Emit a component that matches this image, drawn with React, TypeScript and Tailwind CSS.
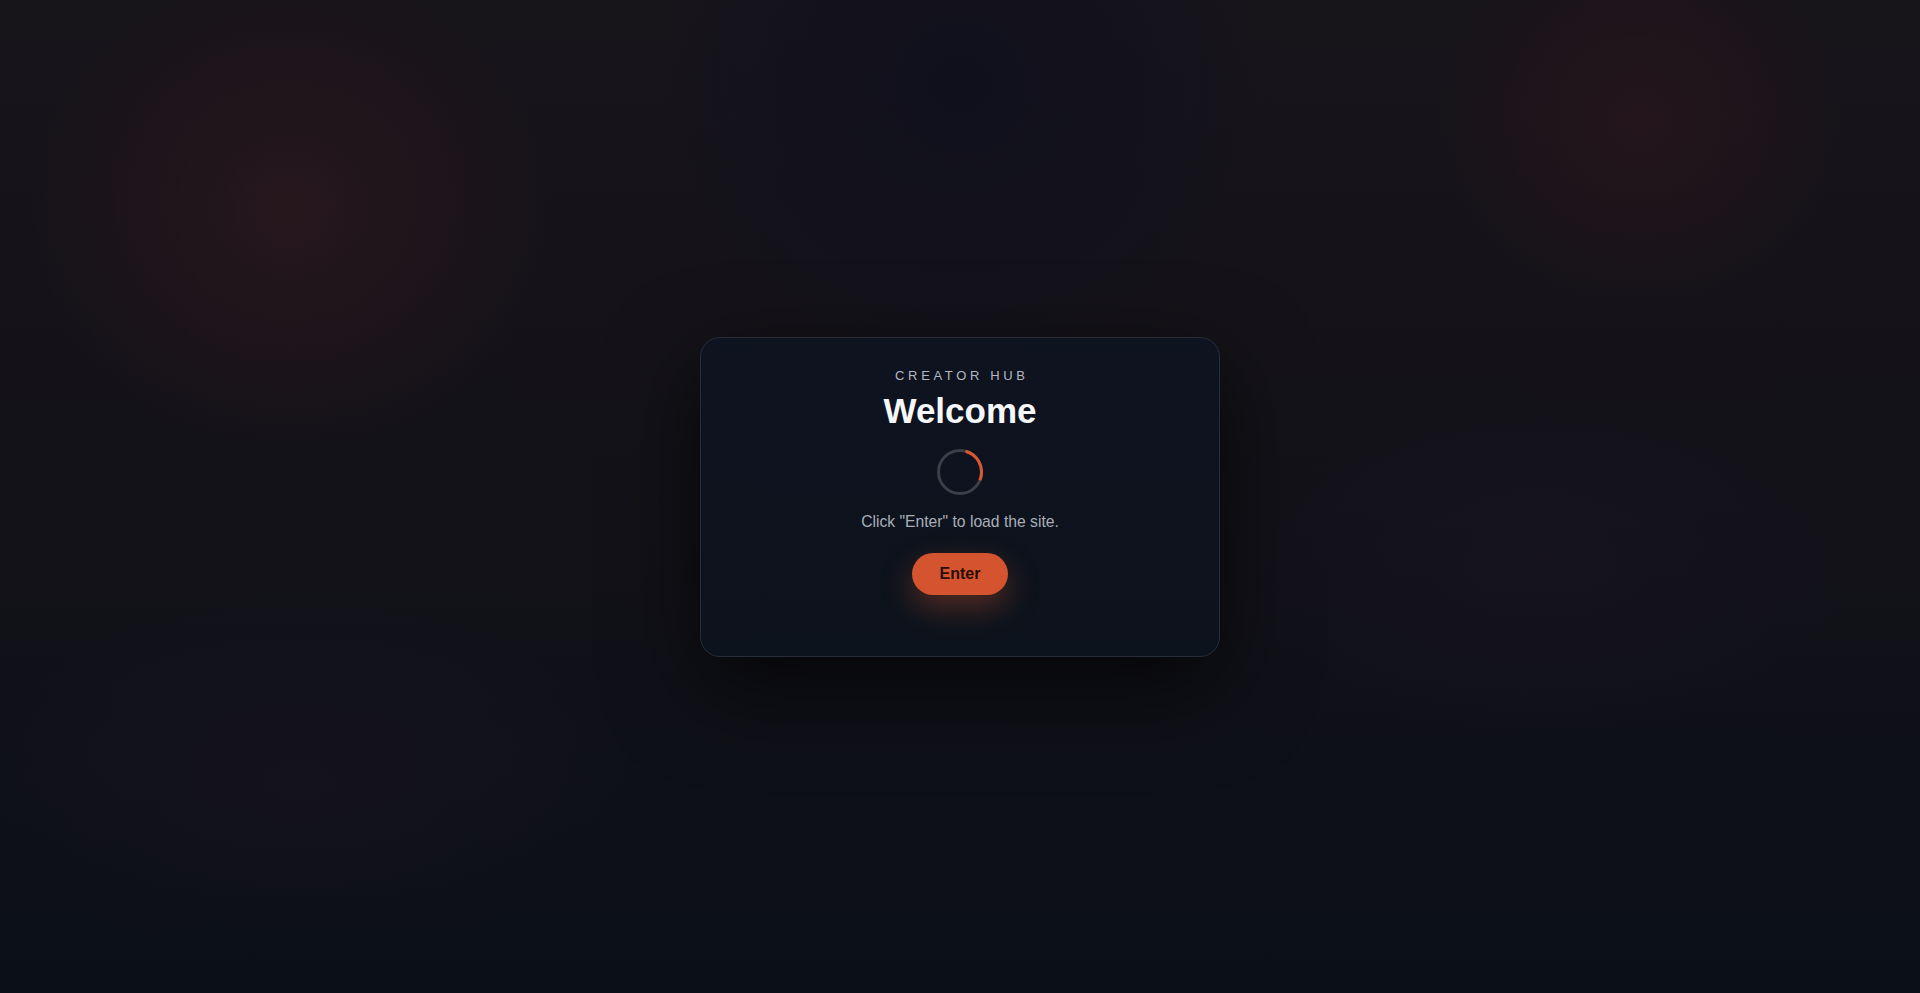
import { useState } from "react";

function Spinner() {
  // static frame of the loading ring: faint track + orange arc
  const r = 21.5;
  const c = 2 * Math.PI * r;
  return (
    <svg width="46" height="46" viewBox="0 0 46 46" className="mt-[17px]">
      <circle cx="23" cy="23" r={r} fill="none" stroke="#3b3f47" strokeWidth="3" />
      <circle
        cx="23"
        cy="23"
        r={r}
        fill="none"
        stroke="#d9572f"
        strokeWidth="3"
        strokeDasharray={`${c * 0.27} ${c}`}
        transform="rotate(-75 23 23)"
      />
    </svg>
  );
}

export default function App() {
  const [entered, setEntered] = useState(false);

  return (
    <div className="flex h-[993px] w-full items-center justify-center overflow-hidden bg-[#121217] bg-[radial-gradient(ellipse_260px_240px_at_290px_210px,rgba(44,24,30,0.75),transparent),radial-gradient(ellipse_200px_190px_at_1640px_120px,rgba(42,22,28,0.7),transparent),radial-gradient(ellipse_300px_280px_at_960px_80px,rgba(14,15,30,0.8),transparent),radial-gradient(ellipse_320px_170px_at_1540px_560px,rgba(22,19,32,0.8),transparent),radial-gradient(ellipse_340px_180px_at_300px_780px,rgba(22,19,32,0.7),transparent),linear-gradient(to_bottom,#17141a,#131218_50%,#0b0f17)] font-['Liberation_Sans',Arial,sans-serif]">
      <section className="flex h-[320px] w-[520px] flex-col items-center rounded-[20px] border border-[#262c3a] bg-gradient-to-b from-[#0e1320] to-[#0d131c] px-8 pt-[28px] shadow-[0_30px_90px_rgba(0,0,0,0.65)]">
        <p className="pl-[0.28em] text-[13px] leading-5 tracking-[0.28em] text-[#b4b8c2]">CREATOR HUB</p>
        <h1 className="mt-1 text-[35px] font-bold leading-[42px] text-[#f5f7fb]">Welcome</h1>
        <Spinner />
        <p className="mt-[15px] text-[15.7px] leading-6 text-[#a9aeb9]">
          {entered ? "Loading…" : 'Click "Enter" to load the site.'}
        </p>
        <button
          onClick={() => setEntered(true)}
          className="mt-[19px] h-[42px] rounded-full bg-[#d4542f] px-7 text-base font-bold text-[#2a0c06] shadow-[0_12px_30px_rgba(214,88,46,0.35)]"
        >
          Enter
        </button>
      </section>
    </div>
  );
}
